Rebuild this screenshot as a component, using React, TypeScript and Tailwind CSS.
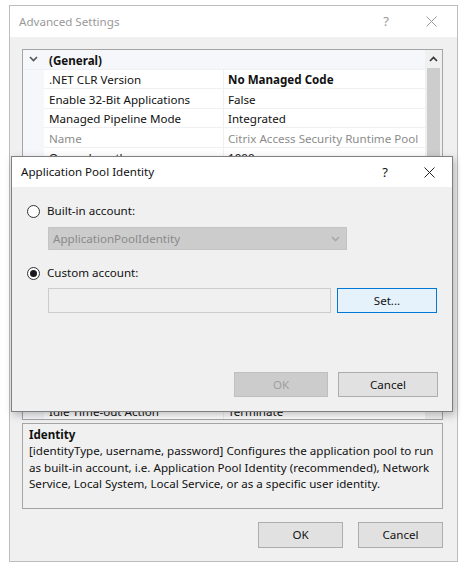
import type { ReactNode } from 'react'

interface GridRow {
  name: string
  value?: string
  category?: boolean
  bold?: boolean
  readOnly?: boolean
}

const rows: GridRow[] = [
  { name: '(General)', category: true },
  { name: '.NET CLR Version', value: 'No Managed Code', bold: true },
  { name: 'Enable 32-Bit Applications', value: 'False' },
  { name: 'Managed Pipeline Mode', value: 'Integrated' },
  { name: 'Name', value: 'Citrix Access Security Runtime Pool', readOnly: true },
  { name: 'Queue Length', value: '1000' },
  { name: 'Start Mode', value: 'OnDemand' },
  { name: 'CPU', category: true },
  { name: 'Limit (percent)', value: '0' },
  { name: 'Limit Action', value: 'NoAction' },
  { name: 'Limit Interval (minutes)', value: '5' },
  { name: 'Processor Affinity Enabled', value: 'False' },
  { name: 'Processor Affinity Mask', value: '4294967295' },
  { name: 'Processor Affinity Mask (64-bit)', value: '4294967295' },
  { name: 'Process Model', category: true },
  { name: 'Generate Event Log Entry', value: '' },
  { name: 'Identity', value: 'ApplicationPoolIdentity' },
  { name: 'Idle Time-out (minutes)', value: '20' },
  { name: 'Idle Time-out Action', value: 'Terminate' },
]

function CloseIcon({ color }: { color: string }) {
  return (
    <svg width="11" height="11" viewBox="0 0 11 11">
      <path d="M0.5 0.5L10.5 10.5M10.5 0.5L0.5 10.5" stroke={color} strokeWidth="1" />
    </svg>
  )
}

function Chevron({ up, color = '#333' }: { up?: boolean; color?: string }) {
  return (
    <svg width="9" height="6" viewBox="0 0 9 6">
      <path
        d={up ? 'M1 5L4.5 1.5L8 5' : 'M1 1L4.5 4.5L8 1'}
        stroke={color}
        strokeWidth="1.6"
        fill="none"
      />
    </svg>
  )
}

function Radio({ checked }: { checked?: boolean }) {
  return (
    <span className="w-[13px] h-[13px] rounded-full border border-[#333333] bg-white flex items-center justify-center shrink-0">
      {checked && <span className="w-[7px] h-[7px] rounded-full bg-[#1a1a1a]" />}
    </span>
  )
}

function WinButton({
  children,
  className,
}: {
  children: ReactNode
  className: string
}) {
  return (
    <div className={`flex items-center justify-center border ${className}`}>{children}</div>
  )
}

function PropertyGrid() {
  return (
    <div className="w-[421px] h-[371px] border border-[#a5a5a5] bg-white flex overflow-hidden">
      <div className="flex-1 flex flex-col">
        {rows.map((r, i) =>
          r.category ? (
            <div key={i} className="h-[19.5px] shrink-0 flex items-center bg-[#f5f7fa] border-b border-[#eef0f3]">
              <span className="w-[21px] flex justify-center">
                <Chevron color="#555" />
              </span>
              <span className="pl-[5px] pt-[3px] font-bold text-[#111]">{r.name}</span>
            </div>
          ) : (
            <div key={i} className="h-[19.5px] shrink-0 flex">
              <span className="w-[21px] bg-[#f5f7fa]" />
              <span
                className={`w-[180px] flex items-center pl-[5px] pt-[3px] border-b border-r border-[#eef0f3] whitespace-nowrap overflow-hidden ${
                  r.readOnly ? 'text-[#8c8c8c]' : 'text-[#111]'
                }`}
              >
                {r.name}
              </span>
              <span
                className={`flex-1 flex items-center pl-[4px] pt-[3px] border-b border-[#eef0f3] whitespace-nowrap overflow-hidden ${
                  r.readOnly ? 'text-[#8c8c8c]' : 'text-[#111]'
                } ${r.bold ? 'font-bold' : ''}`}
              >
                {r.value}
              </span>
            </div>
          ),
        )}
      </div>
      <div className="w-[17px] bg-[#f0f0f0] flex flex-col items-center">
        <div className="h-[18px] flex items-center justify-center">
          <Chevron up color="#333" />
        </div>
        <div className="w-[13px] h-[320px] bg-[#cdcdcd]" />
        <div className="flex-1 flex items-center justify-center">
          <Chevron color="#333" />
        </div>
      </div>
    </div>
  )
}

function IdentityDialog() {
  return (
    <div className="absolute left-[11px] top-[156px] w-[442px] h-[256px] border border-[#7f7f7f] flex flex-col shadow-[2px_3px_8px_rgba(0,0,0,0.25)]">
      <div className="h-[30px] bg-white flex items-center pl-[9px] pr-[17px] text-[#111]">
        <span className="flex-1">Application Pool Identity</span>
        <span className="mr-[36px] text-[13px]">?</span>
        <CloseIcon color="#222" />
      </div>
      <div className="flex-1 bg-[#f0f0f0] pl-[15px] pr-[14px] flex flex-col">
        <div className="mt-[17px] h-[14px] flex items-center gap-[7px]">
          <Radio />
          <span>Built-in account:</span>
        </div>
        <div className="mt-[9px] ml-[21px] w-[299px] h-[23px] bg-[#cccccc] border border-[#c4c4c4] flex items-center pl-[4px] pr-[6px] text-[#8a8a8a]">
          <span className="flex-1">ApplicationPoolIdentity</span>
          <Chevron color="#a8a8a8" />
        </div>
        <div className="mt-[16px] h-[14px] flex items-center gap-[7px]">
          <Radio checked />
          <span>Custom account:</span>
        </div>
        <div className="mt-[8px] ml-[21px] flex gap-[6px]">
          <div className="w-[283px] h-[25px] bg-[#f0f0f0] border border-[#cccccc]" />
          <WinButton className="w-[100px] h-[25px] bg-[#e5f1fb] border-[#0078d7]">Set...</WinButton>
        </div>
        <div className="mt-[59px] flex justify-end gap-[10px]">
          <WinButton className="w-[94px] h-[25px] bg-[#cccccc] border-[#bfbfbf] text-[#a0a0a0]">OK</WinButton>
          <WinButton className="w-[100px] h-[25px] bg-[#e1e1e1] border-[#adadad]">Cancel</WinButton>
        </div>
      </div>
    </div>
  )
}

export default function App() {
  return (
    <div className="relative w-[461px] h-[569px] bg-white pt-[5px] pl-[9px] font-['Noto_Sans',sans-serif] text-[11.6px] text-[#111] leading-none">
      <div className="w-[449px] h-[557px] border border-[#bdbdbd] flex flex-col">
        <div className="h-[31px] bg-white flex items-center pl-[9px] pr-[20px] text-[#999999]">
          <span className="flex-1">Advanced Settings</span>
          <span className="mr-[37px] text-[13px]">?</span>
          <CloseIcon color="#9a9a9a" />
        </div>
        <div className="flex-1 bg-[#f0f0f0] pl-[12px] pt-[12px] flex flex-col">
          <PropertyGrid />
          <div className="mt-[3px] w-[421px] h-[86px] border border-[#a5a5a5] pl-[6px] pt-[3px] whitespace-nowrap">
            <div className="font-bold leading-[16px]">Identity</div>
            <div className="leading-[16.5px]">
              [identityType, username, password] Configures the application pool to run
              <br />
              as built-in account, i.e. Application Pool Identity (recommended), Network
              <br />
              Service, Local System, Local Service, or as a specific user identity.
            </div>
          </div>
          <div className="mt-[13px] w-[421px] flex justify-end gap-[15px]">
            <WinButton className="w-[85px] h-[26px] bg-[#e1e1e1] border-[#adadad]">OK</WinButton>
            <WinButton className="w-[85px] h-[26px] bg-[#e1e1e1] border-[#adadad]">Cancel</WinButton>
          </div>
        </div>
      </div>
      <IdentityDialog />
    </div>
  )
}
